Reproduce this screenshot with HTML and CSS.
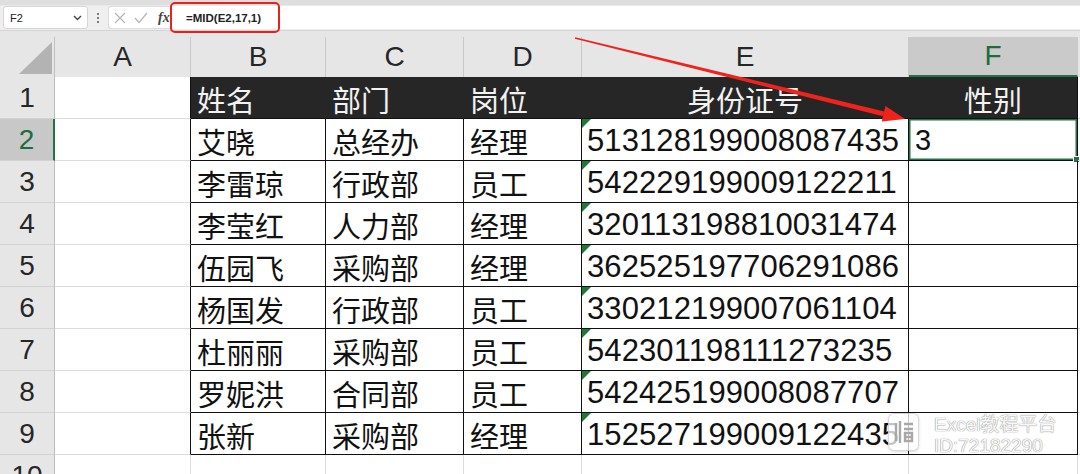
FILE: index.html
```html
<!DOCTYPE html>
<html lang="zh">
<head>
<meta charset="utf-8">
<link rel="stylesheet" href="styles.css">
</head>
<body>
<div class="app">
  <div class="topstrip"></div>
  <div class="toolbar">
    <div class="namebox"><span>F2</span><svg class="chev" width="9" height="6" viewBox="0 0 9 6"><path d="M1 1 L4.5 4.5 L8 1" fill="none" stroke="#444" stroke-width="1.4"/></svg></div>
    <div class="vdots"><i></i><i></i><i></i></div>
    <div class="fxbox">
      <svg width="12" height="12" viewBox="0 0 12 12"><path d="M1 1 L11 11 M11 1 L1 11" stroke="#b5b5b5" stroke-width="1.2"/></svg>
      <svg width="14" height="12" viewBox="0 0 14 12"><path d="M1 6 L5 10.5 L13 1" fill="none" stroke="#b5b5b5" stroke-width="1.2"/></svg>
      <span class="fx">fx</span>
    </div>
    <div class="formula"><span class="ftext">=MID(E2,17,1)</span></div>
  </div>
  <div class="sheet">
    <div class="ch corner"><span><svg width="33" height="32" viewBox="0 0 33 32"><polygon points="0,32 33,32 33,0" fill="#b3b3b3"/></svg></span></div>
    <div class="ch"><span>A</span></div>
    <div class="ch"><span>B</span></div>
    <div class="ch"><span>C</span></div>
    <div class="ch"><span>D</span></div>
    <div class="ch"><span>E</span></div>
    <div class="ch sel"><span>F</span></div>
    <div class="ch"><span></span></div>

    <div class="rh">1</div><div class="c edge"></div>
    <div class="c t hd">姓名</div><div class="c t hd">部门</div><div class="c t hd">岗位</div><div class="c t hd ctr">身份证号</div><div class="c t hd ctr last">性别</div><div class="c"></div>

    <div class="rh rsel">2</div><div class="c edge"></div>
    <div class="c t">艾晓</div><div class="c t">总经办</div><div class="c t">经理</div><div class="c t num tri">513128199008087435</div><div class="c t active">3</div><div class="c"></div>

    <div class="rh">3</div><div class="c edge"></div>
    <div class="c t">李雷琼</div><div class="c t">行政部</div><div class="c t">员工</div><div class="c t num tri">542229199009122211</div><div class="c t"></div><div class="c"></div>

    <div class="rh">4</div><div class="c edge"></div>
    <div class="c t">李莹红</div><div class="c t">人力部</div><div class="c t">经理</div><div class="c t num tri">320113198810031474</div><div class="c t"></div><div class="c"></div>

    <div class="rh">5</div><div class="c edge"></div>
    <div class="c t">伍园飞</div><div class="c t">采购部</div><div class="c t">经理</div><div class="c t num tri">362525197706291086</div><div class="c t"></div><div class="c"></div>

    <div class="rh">6</div><div class="c edge"></div>
    <div class="c t">杨国发</div><div class="c t">行政部</div><div class="c t">员工</div><div class="c t num tri">330212199007061104</div><div class="c t"></div><div class="c"></div>

    <div class="rh">7</div><div class="c edge"></div>
    <div class="c t">杜丽丽</div><div class="c t">采购部</div><div class="c t">员工</div><div class="c t num tri">542301198111273235</div><div class="c t"></div><div class="c"></div>

    <div class="rh">8</div><div class="c edge"></div>
    <div class="c t">罗妮洪</div><div class="c t">合同部</div><div class="c t">员工</div><div class="c t num tri">542425199008087707</div><div class="c t"></div><div class="c"></div>

    <div class="rh">9</div><div class="c edge"></div>
    <div class="c t">张新</div><div class="c t">采购部</div><div class="c t">经理</div><div class="c t num tri">152527199009122435</div><div class="c t"></div><div class="c"></div>

    <div class="rh">10</div><div class="c"></div>
    <div class="c"></div><div class="c"></div><div class="c"></div><div class="c"></div><div class="c"></div><div class="c"></div>
  </div>

  <div class="callout"></div>

  <svg class="arrow" width="1080" height="474" viewBox="0 0 1080 474">
    <polygon points="574.8,38.7 575.2,37.3 884.2,111.4 883.0,116.2" fill="#f0231c"/>
    <polygon points="905,119 881.7,121.6 885.5,106.0" fill="#f0231c"/>
  </svg>

  <div class="watermark">
    <div class="wm-icon"><svg width="24" height="26" viewBox="0 0 24 26"><path d="M4 4 V22 M8 2 V24 M12 5 H21 M12 10 H21 M13 14 H20 V22 H13 Z M13 18 H20" fill="none" stroke="#a8a8a8" stroke-width="2.4"/></svg></div>
    <div class="wm-text"><div>Excel教程平台</div><div>ID:72182290</div></div>
  </div>
</div>
</body>
</html>
```
FILE: styles.css
```css
* { box-sizing: border-box; }
html, body { margin: 0; padding: 0; }
body {
  width: 1080px;
  height: 474px;
  overflow: hidden;
  background: #ffffff;
  font-family: "Liberation Sans", "Noto Sans CJK SC", sans-serif;
}
.app { position: relative; width: 1080px; height: 474px; overflow: hidden; }

.topstrip { height: 6px; background: #dedede; border-bottom: 1px solid #e9e9e9; }
.toolbar {
  height: 25px;
  display: flex;
  align-items: stretch;
  background: #efefef;
  border-bottom: 1px solid #d4d4d4;
  padding-left: 3px;
}
.namebox {
  width: 85px;
  height: 23px;
  background: #fff;
  border: 1px solid #d6d6d6;
  border-radius: 3px;
  display: flex;
  align-items: center;
  justify-content: space-between;
  padding: 0 5px 0 6px;
  font-size: 11px;
  color: #222;
}
.vdots {
  width: 20px;
  display: flex;
  flex-direction: column;
  align-items: center;
  justify-content: center;
  gap: 2px;
}
.vdots i { display: block; width: 2px; height: 2px; background: #555; border-radius: 1px; }
.fxbox {
  width: 64px;
  height: 23px;
  background: #fff;
  border: 1px solid #dcdcdc;
  border-right: none;
  border-radius: 3px 0 0 3px;
  display: flex;
  align-items: center;
  gap: 8px;
  padding-left: 5px;
}
.fx {
  font-family: "Liberation Serif", serif;
  font-style: italic;
  font-weight: bold;
  font-size: 14px;
  color: #444;
  margin-left: 2px;
}
.formula {
  flex: 1;
  height: 23px;
  background: #fff;
  display: flex;
  align-items: center;
  padding-left: 14px;
}
.ftext {
  font-size: 11.5px;
  font-weight: bold;
  color: #222;
}

.callout {
  position: absolute;
  left: 170px;
  top: 2px;
  width: 110px;
  height: 31px;
  border: 2px solid #e8221b;
  border-radius: 5px;
}

.sheet {
  display: grid;
  grid-template-columns: 55px 136px 135px 138px 118px 327px 169px 1fr;
  grid-template-rows: 46px repeat(9, 42px) 42px;
  background: #fff;
}
.ch {
  background: #e6e6e6;
  padding-top: 6px;
}
.ch span {
  display: flex;
  align-items: center;
  justify-content: center;
  height: 40px;
  border-right: 1px solid #c9c9c9;
  font-size: 28px;
  color: #262626;
}
.ch.corner span { justify-content: flex-end; align-items: flex-end; padding: 0 2px 3px 0; border-right: 1px solid #c0c0c0; }
.ch.sel span {
  background: #cacaca;
  color: #1e6b40;
  border-bottom: 2px solid #217346;
}
.rh {
  background: #e6e6e6;
  border-right: 1px solid #bdbdbd;
  border-bottom: 1px solid #d2d2d2;
  display: flex;
  align-items: center;
  justify-content: center;
  font-size: 28px;
  color: #262626;
}
.rh.rsel {
  background: #c8c8c8;
  color: #1e6b40;
  border-right: 2px solid #217346;
}
.c {
  position: relative;
  border-right: 1px solid #dcdcdc;
  border-bottom: 1px solid #dcdcdc;
  display: flex;
  align-items: center;
  padding: 2px 0 0 6px;
  font-size: 29px;
  color: #111;
  white-space: nowrap;
  overflow: hidden;
}
.c.edge { border-right: 1px solid #111; }
.c.t { border-right: 1px solid #111; border-bottom: 1px solid #111; }
.c.hd { background: #262626; color: #f2f2f2; border-right-color: #262626; border-bottom-color: #111; }
.c.hd.last { border-right-color: #111; }
.c.ctr { justify-content: center; padding-left: 0; }
.c.num { font-size: 31px; padding-left: 5px; letter-spacing: 0.1px; }
.c.tri::before {
  content: "";
  position: absolute;
  left: 0;
  top: 0;
  border-top: 9px solid #1d7a35;
  border-right: 9px solid transparent;
}
.c.active {
  box-shadow: inset 0 0 0 1.5px #217346;
  overflow: visible;
}
.c.active::after {
  content: "";
  position: absolute;
  right: -3px;
  bottom: -3px;
  width: 5px;
  height: 5px;
  background: #217346;
  border: 1px solid #fff;
}

.arrow { position: absolute; left: 0; top: 0; pointer-events: none; }

.watermark {
  position: absolute;
  left: 888px;
  top: 413px;
  display: flex;
  align-items: flex-start;
  gap: 15px;
}
.wm-icon {
  width: 31px;
  height: 38px;
  border-radius: 6px;
  background: rgba(255, 255, 255, 0.75);
  border: 1px solid rgba(190, 190, 190, 0.6);
  box-shadow: 0 1px 3px rgba(0, 0, 0, 0.15);
  display: flex;
  align-items: center;
  justify-content: center;
}
.wm-text {
  font-size: 19px;
  line-height: 21px;
  color: rgba(255, 255, 255, 0.95);
  text-shadow: 0 0 1px #8f8f8f, 0 0 1px #8f8f8f;
  padding-top: 1px;
}
```
